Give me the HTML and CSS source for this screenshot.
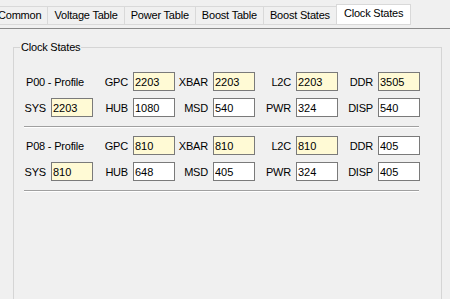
FILE: index.html
```html
<!DOCTYPE html>
<html>
  <head>
    <meta charset="UTF-8" />
    <link rel="stylesheet" href="styles.css">
  </head>

  <body>
    <div class="tabs">
      <div class="tab">Common</div>
      <div class="tab">Voltage Table</div>
      <div class="tab">Power Table</div>
      <div class="tab">Boost Table</div>
      <div class="tab">Boost States</div>
      <div class="tab active">Clock States</div>
    </div>

    <div class="page">
      <fieldset class="group">
        <legend>Clock States</legend>

        <div class="profile">
          <span class="profile-name">P00 - Profile</span>
          <label>GPC</label><input class="field hl" value="2203" />
          <label>XBAR</label><input class="field hl" value="2203" />
          <label>L2C</label><input class="field hl" value="2203" />
          <label>DDR</label><input class="field hl" value="3505" />

          <label>SYS</label><input class="field hl" value="2203" />
          <label>HUB</label><input class="field" value="1080" />
          <label>MSD</label><input class="field" value="540" />
          <label>PWR</label><input class="field" value="324" />
          <label>DISP</label><input class="field" value="540" />
        </div>
        <div class="sep"></div>

        <div class="profile">
          <span class="profile-name">P08 - Profile</span>
          <label>GPC</label><input class="field hl" value="810" />
          <label>XBAR</label><input class="field hl" value="810" />
          <label>L2C</label><input class="field hl" value="810" />
          <label>DDR</label><input class="field" value="405" />

          <label>SYS</label><input class="field hl" value="810" />
          <label>HUB</label><input class="field" value="648" />
          <label>MSD</label><input class="field" value="405" />
          <label>PWR</label><input class="field" value="324" />
          <label>DISP</label><input class="field" value="405" />
        </div>
        <div class="sep"></div>
      </fieldset>
    </div>
  </body>
</html>
```

FILE: styles.css
```css
html {
  overflow: hidden;
}
body {
  margin: 0;
  background: #f0f0f0;
  color: #000;
  font-family: "Liberation Sans", Arial, sans-serif;
  font-size: 11px;
  letter-spacing: -0.2px;
}

/* tab strip */
.tabs {
  display: flex;
  height: 28px;
  margin-left: -8px;
  border-bottom: 1px solid #8a8a8a;
}
.tab {
  box-sizing: border-box;
  height: 19px;
  margin-top: 6px;
  margin-left: -1px;
  padding: 0 6px;
  line-height: 17px;
  border: 1px solid #d9d9d9;
  background: #f0f0f0;
  white-space: nowrap;
}
.tab.active {
  height: 21px;
  margin-top: 4px;
  padding: 0 7px;
  line-height: 16px;
  background: #fff;
}

/* group box */
.group {
  min-height: 280px;
  margin: 12px 8px 0 13px;
  padding: 0 0 0 10px;
  border: 1px solid #d5d5d5;
}
.group legend {
  margin-left: -4px;
  padding: 0 1px;
  line-height: 13px;
}

.profile {
  display: grid;
  grid-template-columns: 27px 42px 40px 42px 38px 42px 41px 42px 40px 42px;
  grid-auto-rows: 19px;
  row-gap: 7px;
  margin-top: 18px;
}
.sep + .profile {
  margin-top: 8px;
}
.profile label {
  align-self: center;
  padding-right: 5px;
  text-align: right;
}
.profile-name {
  grid-column: span 2;
  align-self: center;
  padding-left: 2px;
}
.field {
  box-sizing: border-box;
  width: 42px;
  height: 19px;
  margin: 0;
  padding: 0 1px;
  border: 1px solid #7a7a7a;
  background: #fff;
  font: inherit;
  letter-spacing: 0;
  color: #000;
}
.field.hl {
  background: #fffad5;
}

.sep {
  width: 395px;
  height: 0;
  margin-top: 9px;
  border-top: 1px solid #a0a0a0;
  border-bottom: 1px solid #fff;
}
```
